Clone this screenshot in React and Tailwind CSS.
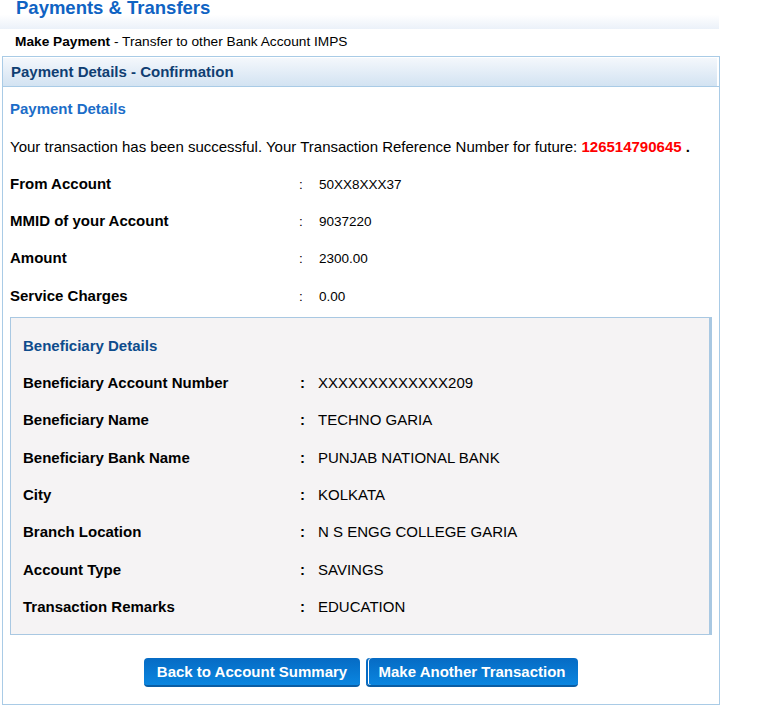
import React from 'react';

const summaryRows = [
  { label: 'From Account', value: '50XX8XXX37' },
  { label: 'MMID of your Account', value: '9037220' },
  { label: 'Amount', value: '2300.00' },
  { label: 'Service Charges', value: '0.00' },
];

const beneficiaryRows = [
  { label: 'Beneficiary Account Number', value: 'XXXXXXXXXXXXX209' },
  { label: 'Beneficiary Name', value: 'TECHNO GARIA' },
  { label: 'Beneficiary Bank Name', value: 'PUNJAB NATIONAL BANK' },
  { label: 'City', value: 'KOLKATA' },
  { label: 'Branch Location', value: 'N S ENGG COLLEGE GARIA' },
  { label: 'Account Type', value: 'SAVINGS' },
  { label: 'Transaction Remarks', value: 'EDUCATION' },
];

function SummaryRow({ label, value, height = 'h-[37px]' }) {
  return (
    <div className={`flex items-baseline leading-[37px] ${height}`}>
      <span className="w-[289px] shrink-0 text-[15px] font-bold text-black">{label}</span>
      <span className="w-[20px] shrink-0 text-[13.5px] text-black">:</span>
      <span className="text-[13.5px] text-black">{value}</span>
    </div>
  );
}

function BeneficiaryRow({ label, value }) {
  return (
    <div className="flex h-[37.33px] items-baseline leading-[37.33px]">
      <span className="w-[277px] shrink-0 text-[15px] font-bold text-black">{label}</span>
      <span className="w-[18px] shrink-0 text-[15px] font-bold text-black">:</span>
      <span className="text-[15px] text-black">{value}</span>
    </div>
  );
}

function BlueButton({ children, width, capped = false }) {
  return (
    <button
      type="button"
      className={`h-[29px] rounded-[4px] border-b-2 border-[#0a5da4] bg-gradient-to-b from-[#066bc4] to-[#0b86e0] text-[15px] font-bold leading-[27px] text-white ${width} ${
        capped ? 'shadow-[inset_2px_0_0_#066bc4,inset_3px_0_0_#ffffff]' : ''
      }`}
    >
      {children}
    </button>
  );
}

export default function App() {
  return (
    <div className="h-[722px] w-[774px] overflow-hidden bg-white font-['Liberation_Sans',Arial,sans-serif] text-black">
      <div className="flex h-[29px] w-[719px] flex-col bg-gradient-to-b from-white from-50% to-[#ebf1f9]">
        <h1 className="-mt-[2px] pl-[16px] text-[18.5px] font-bold leading-[20px] text-[#0f63c3]">
          Payments &amp; Transfers
        </h1>
      </div>

      <p className="pl-[15px] pt-[5px] text-[13.7px] leading-[16px] text-black">
        <span className="font-bold">Make Payment</span> - Transfer to other Bank Account IMPS
      </p>

      <div className="ml-[2px] mt-[6px] box-border h-[649px] w-[718px] border border-[#a9cbe6]">
        <div className="box-border h-[30px] border-b border-[#a9cbe6] bg-gradient-to-b from-[#f5f8fc] to-[#d3e3f2] pl-[8px] text-[15px] font-bold leading-[29px] text-[#0f3e72] shadow-[inset_-2px_1px_0_#ffffff]">
          Payment Details - Confirmation
        </div>

        <div className="px-[7px] pt-[12px]">
          <h2 className="text-[15px] font-bold leading-[20px] text-[#1b6dc8]">Payment Details</h2>

          <p className="mt-[18px] whitespace-nowrap text-[15px] leading-[20px] text-black">
            Your transaction has been successful. Your Transaction Reference Number for future:{' '}
            <span className="font-bold text-[#ff0000]">126514790645</span> <span className="font-bold">.</span>
          </p>

          <div className="mt-[8px]">
            {summaryRows.map((row, i) => (
              <SummaryRow
                key={row.label}
                label={row.label}
                value={row.value}
                height={i === summaryRows.length - 1 ? 'h-[38px] pt-[1px]' : 'h-[37px]'}
              />
            ))}
          </div>

          <div className="mt-[3px] box-border h-[318px] w-[702px] border border-r-[3px] border-[#a9c8e2] bg-[#f5f3f4] pl-[12px] pt-[18px]">
            <h3 className="text-[15px] font-bold leading-[20px] text-[#0e4c8c]">Beneficiary Details</h3>
            <div className="mt-[8px]">
              {beneficiaryRows.map((row) => (
                <BeneficiaryRow key={row.label} label={row.label} value={row.value} />
              ))}
            </div>
          </div>

          <div className="mt-[23px] flex justify-center gap-[6px]">
            <BlueButton width="w-[216px]">Back to Account Summary</BlueButton>
            <BlueButton width="w-[212px]" capped>
              Make Another Transaction
            </BlueButton>
          </div>
        </div>
      </div>
    </div>
  );
}
